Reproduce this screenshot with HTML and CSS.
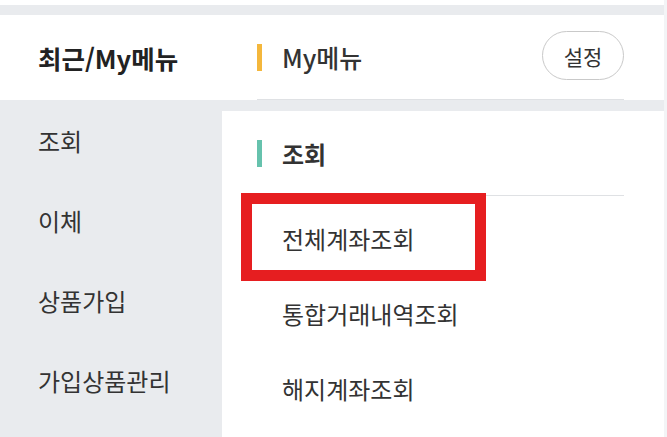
FILE: index.html
```html
<!DOCTYPE html>
<html lang="ko">
<head>
<meta charset="utf-8">
<link rel="stylesheet" href="styles.css">
</head>
<body>
<div class="page">
  <div class="main">
    <div class="top-white"></div>
    <div class="top-gap"></div>
    <div class="header">
      <div class="header-left">최근/My메뉴</div>
      <div class="header-right">
        <div class="mymenu">
          <span class="bar bar-yellow"></span>
          <span class="mymenu-title">My메뉴</span>
        </div>
        <button class="btn-setting">설정</button>
      </div>
    </div>
    <div class="body">
      <ul class="nav">
        <li class="nav-item">조회</li>
        <li class="nav-item">이체</li>
        <li class="nav-item">상품가입</li>
        <li class="nav-item">가입상품관리</li>
      </ul>
      <div class="panel">
        <div class="section-head">
          <span class="bar bar-teal"></span>
          <span class="section-title">조회</span>
        </div>
        <ul class="menu">
          <li class="menu-item highlighted">전체계좌조회<span class="mark"></span></li>
          <li class="menu-item">통합거래내역조회</li>
          <li class="menu-item">해지계좌조회</li>
        </ul>
      </div>
    </div>
  </div>
  <div class="edge"></div>
</div>
</body>
</html>
```
FILE: styles.css
```css
* { box-sizing: border-box; }
html, body { margin: 0; padding: 0; }
body {
  font-family: "Noto Sans CJK KR", "Noto Sans", sans-serif;
  color: #333;
  background: #fff;
}
.page {
  display: flex;
  width: 667px;
  height: 437px;
  overflow: hidden;
}
.main {
  width: 664px;
  display: flex;
  flex-direction: column;
  background: #e9ebee;
}
.edge {
  flex: 1;
  background: #f3f4f6;
}
.top-white { height: 5px; background: #fff; }
.top-gap { height: 10px; }
.header {
  height: 85px;
  background: #fff;
  display: flex;
}
.header-left {
  width: 222px;
  padding-left: 38px;
  display: flex;
  align-items: center;
  font-size: 25.5px;
  font-weight: 700;
  color: #222;
}
.header-right {
  margin-left: 35px;
  width: 367px;
  display: flex;
  align-items: center;
  justify-content: space-between;
  border-bottom: 1px solid #dfe1e4;
}
.mymenu { display: flex; align-items: center; }
.bar {
  display: inline-block;
  width: 5px;
  height: 27px;
  margin-right: 20px;
}
.bar-yellow { background: #f4b73c; }
.bar-teal { background: #66c2ad; }
.mymenu-title {
  font-size: 25px;
  font-weight: 500;
  color: #333;
}
.btn-setting {
  width: 82px;
  height: 49px;
  border: 1.5px solid #c9c9c9;
  border-radius: 25px;
  background: #fff;
  font-family: inherit;
  font-size: 21px;
  color: #333;
  padding: 0;
  margin-bottom: 3px;
}
.body {
  flex: 1;
  display: flex;
}
.nav {
  list-style: none;
  margin: 0;
  padding: 0;
  width: 222px;
}
.nav-item {
  height: 80px;
  display: flex;
  align-items: center;
  padding-left: 38px;
  font-size: 24px;
  color: #333;
}
.panel {
  flex: 1;
  margin-top: 11px;
  background: #fff;
  padding-left: 35px;
}
.section-head {
  width: 367px;
  height: 85px;
  display: flex;
  align-items: center;
  border-bottom: 1px solid #dfe1e4;
}
.section-title {
  font-size: 24px;
  font-weight: 700;
  color: #333;
}
.menu {
  list-style: none;
  margin: 0;
  padding: 5px 0 0;
  width: 367px;
}
.menu-item {
  position: relative;
  height: 75px;
  display: flex;
  align-items: center;
  padding-left: 25px;
  font-size: 24px;
  color: #333;
}
.mark {
  position: absolute;
  left: -16px;
  top: -8px;
  width: 245px;
  height: 88px;
  border: 11px solid #e61e20;
}
```
